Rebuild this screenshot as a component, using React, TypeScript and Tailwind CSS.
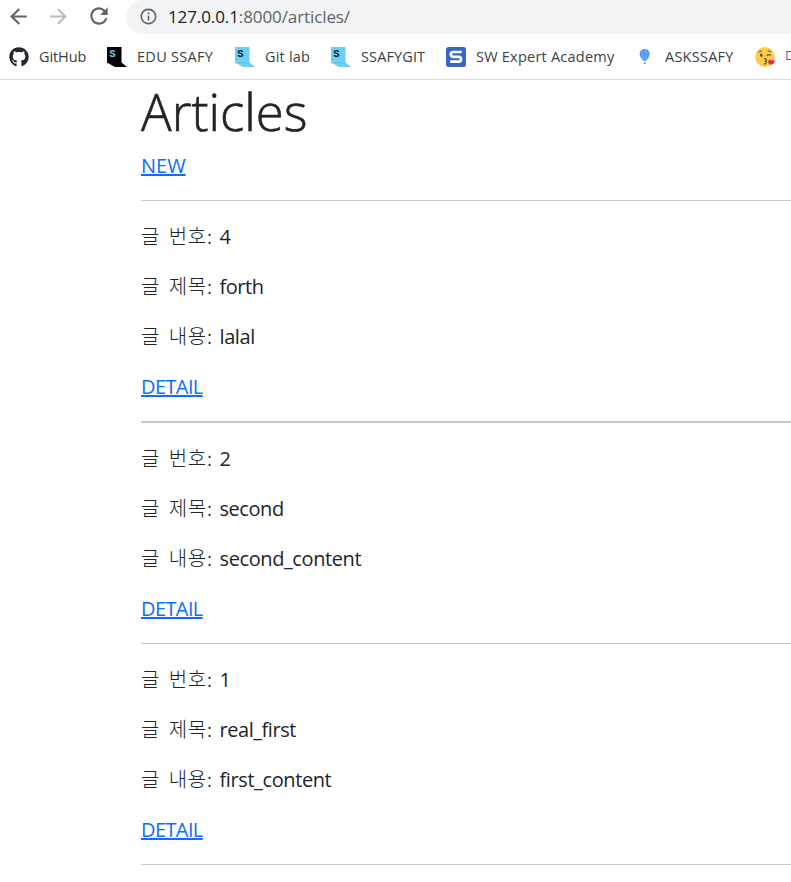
import { FaGithub } from "react-icons/fa";
import { MdArrowBack, MdArrowForward, MdRefresh, MdInfoOutline } from "react-icons/md";
import type { ReactNode } from "react";

type Article = { id: string; title: string; content: string; rule: string };

const articles: Article[] = [
  { id: "4", title: "forth", content: "lalal", rule: "h-[2px]" },
  { id: "2", title: "second", content: "second_content", rule: "h-px" },
  { id: "1", title: "real_first", content: "first_content", rule: "h-px" },
];

function Flag({ fill, letter, edge }: { fill: string; letter: string; edge: string }) {
  return (
    <svg className="h-5 w-5 shrink-0" viewBox="0 0 20 20">
      <path d="M0 0H14.5V15.5L20 20H8L0 15.5Z" fill={fill} />
      <path d="M0 15.7H14.5" stroke={edge} strokeWidth=".5" />
      <text x="2.2" y="10.2" fontSize="10.5" fontWeight="700" fontFamily="Liberation Mono, monospace" fill={letter}>S</text>
    </svg>
  );
}

function ExpertIcon() {
  return (
    <svg className="h-5 w-5 shrink-0" viewBox="0 0 20 20">
      <rect width="20" height="20" rx="2.5" fill="#3b66c4" />
      <path d="M15.7 5H7.2Q4.8 5 4.8 7.3T7.2 9.8H12.8Q15 9.8 15 12.2T12.8 14.7H4.2" fill="none" stroke="#fff" strokeWidth="2.7" />
    </svg>
  );
}

function Balloon() {
  return (
    <svg className="h-5 w-5 shrink-0" viewBox="0 0 20 20">
      <path d="M9.7 2C6.500 2 4.700 4.100 4.700 7c0 3 2.200 4.800 3.600 7h2.800C12.500 11.800 14.700 10 14.700 7c0-2.900-1.800-5-5-5Z" fill="#4d9bf5" />
      <path d="M8 2.600C6.600 6 7.200 10 8.900 13.500M10.300 2.300c1.300 3.500 1.300 7.500.2 11.200" fill="none" stroke="#83bbfa" strokeWidth=".8" />
      <rect x="8.700" y="15.200" width="2" height="2" rx=".6" fill="#4d9bf5" />
    </svg>
  );
}

function KissFace() {
  return (
    <svg className="h-5 w-5 shrink-0" viewBox="0 0 20 20">
      <circle cx="10" cy="10" r="9.900" fill="#ffcb4c" />
      <path d="M3.500 5.500Q4.800 3.800 6.800 3.900M12.500 3.900Q14.800 3.600 16 5.200" fill="none" stroke="#65471b" strokeWidth="1" />
      <ellipse cx="6.300" cy="8.200" rx="1.200" ry="1.700" fill="#65471b" />
      <path d="M11.800 8.800Q13.600 6.800 15.800 8.500" fill="none" stroke="#65471b" strokeWidth="1.200" />
      <path d="M9 11.500q3 .2 2.300 1.600-.5.900-1.700.9 2.300.3 1.700 1.700-.6 1.300-2.400 1.400" fill="none" stroke="#65471b" strokeWidth="1.100" />
      <path d="M14.700 17.800c-1.500-1.600-2-3.400-1-4.500.9-1 2.300-.7 2.800.3.900-1 2.400-.8 3 .2.700 1.600-1.700 3.700-4.800 4Z" fill="#dd2e44" />
    </svg>
  );
}

function Field({ label, value, spacing }: { label: string; value: string; spacing: string }) {
  return (
    <p className="flex h-[50px] items-start leading-[30px]">
      <span className="-mt-px w-[78.500px] shrink-0 font-['Noto_Sans_CJK_KR',sans-serif] font-light tracking-[0.700px] whitespace-nowrap [word-spacing:3.500px]">{label}</span>
      <span className={spacing}>{value}</span>
    </p>
  );
}

function Link({ children }: { children: ReactNode }) {
  return (
    <a className="text-[#0d6efd] underline decoration-[2px] underline-offset-[1px]" href="#">{children}</a>
  );
}

const bookmark = "flex shrink-0 items-center gap-[10px] whitespace-nowrap text-[14.500px]";

export default function App() {
  return (
    <div className="h-[882px] w-[791px] overflow-hidden bg-white font-['Open_Sans','Noto_Sans_CJK_KR',sans-serif] text-[#212529]">
      <header className="h-20 border-b border-[#dadce0] text-[#3c4043]">
        <div className="flex h-[34px] items-start">
          <div className="flex h-8 w-[126px] shrink-0 items-center pl-[6px] text-[#5f6368]">
            <MdArrowBack className="h-[25px] w-[25px]" />
            <MdArrowForward className="ml-[15px] h-[25px] w-[25px] text-[#babcbe]" />
            <MdRefresh className="ml-[15px] h-[26px] w-[26px]" />
          </div>
          <div className="flex h-[34px] grow items-center rounded-l-full bg-[#f1f3f4] pl-[13px]">
            <MdInfoOutline className="-mt-[2px] h-[19px] w-[19px] text-[#5f6368]" />
            <span className="ml-[10px] text-[17px] tracking-[-0.100px] text-[#5f6368]">
              <span className="text-[#202124]">127.0.0.1</span>:8000/articles/
            </span>
          </div>
        </div>
        <nav className="flex h-[45px] items-center pl-[9px]">
          <div className={`${bookmark} w-[98px] tracking-[-0.100px]`}><FaGithub className="h-5 w-5 text-[#24292f]" />GitHub</div>
          <div className={`${bookmark} w-[128px] tracking-[0.300px]`}><Flag fill="#000000" letter="#6fcdf5" edge="#000000" />EDU SSAFY</div>
          <div className={`${bookmark} w-[96px] tracking-[0.200px]`}><Flag fill="#6dcff6" letter="#10232c" edge="#5dbde4" />Git lab</div>
          <div className={`${bookmark} w-[115px] tracking-[0.120px]`}><Flag fill="#6dcff6" letter="#10232c" edge="#5dbde4" />SSAFYGIT</div>
          <div className={`${bookmark} w-[189px] tracking-[0.230px]`}><ExpertIcon />SW Expert Academy</div>
          <div className={`${bookmark} w-[120px] tracking-[0.250px]`}><Balloon />ASKSSAFY</div>
          <div className={`${bookmark} font-light`}><KissFace />다음</div>
        </nav>
      </header>
      <main className="ml-[141px] text-[20px]">
        <h1 className="h-[71px] pt-px text-[51px] leading-[60px] font-light [-webkit-text-stroke:0.600px_#212529]">Articles</h1>
        <div className="h-[49px] leading-[30px]"><Link>NEW</Link></div>
        <hr className="h-px border-0 bg-[#c8c9ca]" />
        {articles.map((article) => (
          <article key={article.id} className="pt-[21px]">
            <Field label="글 번호:" value={article.id} spacing="tracking-normal" />
            <Field label="글 제목:" value={article.title} spacing="tracking-[-0.450px]" />
            <Field label="글 내용:" value={article.content} spacing="tracking-[-0.400px]" />
            <div className="h-[49px] leading-[30px] tracking-[-0.600px]"><Link>DETAIL</Link></div>
            <hr className={`${article.rule} border-0 bg-[#c8c9ca]`} />
          </article>
        ))}
      </main>
    </div>
  );
}
